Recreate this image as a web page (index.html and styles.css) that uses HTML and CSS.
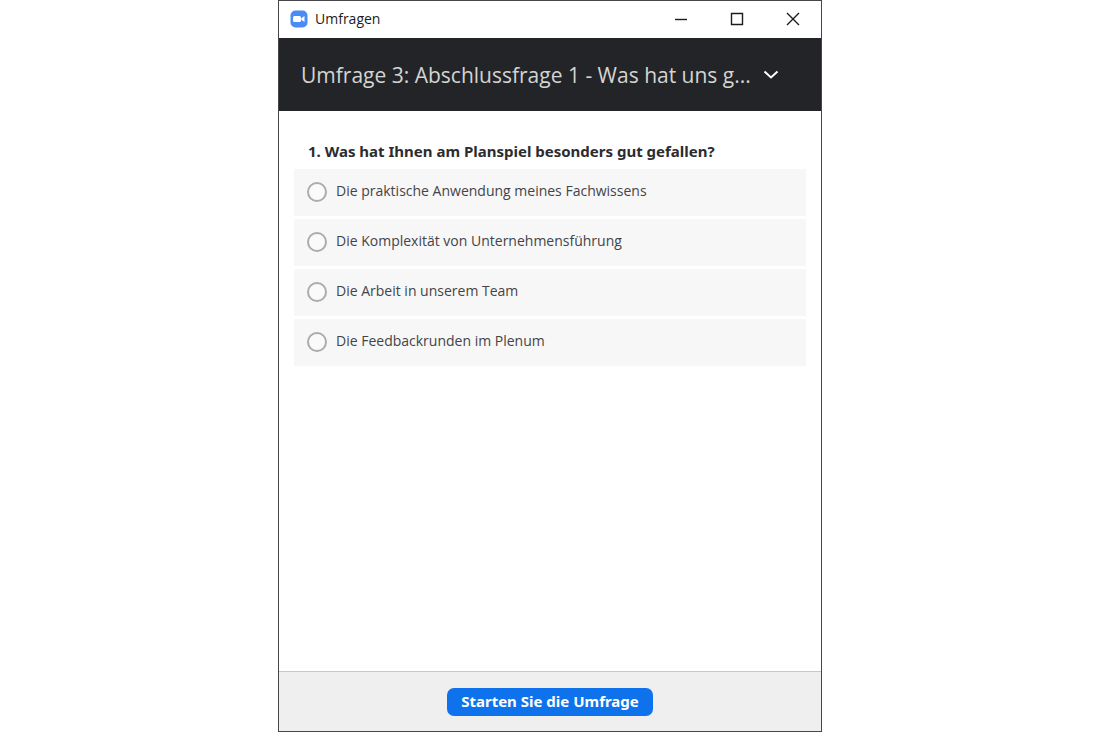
FILE: index.html
```html
<!DOCTYPE html>
<html lang="de">
<head>
  <meta charset="UTF-8">
  <meta name="viewport" content="width=device-width, initial-scale=1.0">
  <title>Umfragen</title>
  <link rel="stylesheet" href="styles.css">
</head>
<body>

  <div class="window">
    <header class="titlebar">
      <svg class="app-icon" viewBox="0 0 18 18" aria-hidden="true">
        <rect x="0.500" y="0.500" width="17" height="17" rx="5" fill="#4a8cf7"/>
        <rect x="3" y="6" width="8" height="6" rx="1.500" fill="#fff"/>
        <path d="M11.300 8.200 14.500 6v6l-3.200-2.200z" fill="#fff"/>
      </svg>
      <span class="app-name">Umfragen</span>
      <div class="window-controls">
        <button type="button" aria-label="Minimieren">
          <svg viewBox="0 0 14 14"><path d="M1 7.500h12"/></svg>
        </button>
        <button type="button" aria-label="Maximieren">
          <svg viewBox="0 0 14 14"><path d="M1.500 1.500h11v11h-11z"/></svg>
        </button>
        <button type="button" aria-label="Schließen">
          <svg viewBox="0 0 14 14"><path d="M1 1l12 12M13 1L1 13"/></svg>
        </button>
      </div>
    </header>

    <div class="poll-header">
      <div class="poll-picker">
        <select class="poll-select" aria-label="Umfrage auswählen">
          <option>Umfrage 3: Abschlussfrage 1 - Was hat uns g...</option>
        </select>
        <svg class="chevron" viewBox="0 0 16 10" aria-hidden="true"><path d="M1.500 1.500 8 7.500l6.500-6"/></svg>
      </div>
    </div>

    <form class="poll" id="pollForm">
      <fieldset class="question">
        <legend>1. Was hat Ihnen am Planspiel besonders gut gefallen?</legend>
        <label class="option"><input type="radio" name="q1"><span>Die praktische Anwendung meines Fachwissens</span></label>
        <label class="option"><input type="radio" name="q1"><span>Die Komplexität von Unternehmensführung</span></label>
        <label class="option"><input type="radio" name="q1"><span>Die Arbeit in unserem Team</span></label>
        <label class="option"><input type="radio" name="q1"><span>Die Feedbackrunden im Plenum</span></label>
      </fieldset>
    </form>

    <footer class="footer">
      <button type="submit" form="pollForm" class="start-btn">Starten Sie die Umfrage</button>
    </footer>
  </div>

</body>
</html>
```
FILE: styles.css
```css
* {
  box-sizing: border-box;
}

body {
  margin: 0;
  background: #fff;
  font-family: "Open Sans", "Noto Sans", sans-serif;
  font-size: 14px;
  color: #444448;
}

.window {
  display: flex;
  flex-direction: column;
  max-width: 544px;
  min-height: 100vh;
  margin: 0 auto;
  border: 1px solid #46464a;
  background: #fff;
}

.titlebar {
  display: flex;
  align-items: center;
  height: 37px;
  padding: 0 0 2px 11px;
}

.app-icon {
  width: 18px;
  height: 18px;
  margin-right: 7px;
}

.app-name {
  color: #1c1c1e;
}

.window-controls {
  display: flex;
  margin-left: auto;
}

.window-controls button {
  display: flex;
  align-items: center;
  justify-content: center;
  width: 56px;
  height: 35px;
  padding: 0;
  border: none;
  background: none;
}

.window-controls svg {
  width: 14px;
  height: 14px;
  fill: none;
  stroke: #1c1c1e;
  stroke-width: 1.4;
}

/* Dark bar with the poll drop-down */
.poll-header {
  display: flex;
  align-items: center;
  height: 73px;
  padding: 0 22px;
  background: #232428;
}

.poll-picker {
  display: grid;
  align-items: center;
  max-width: 100%;
}

.poll-select {
  grid-area: 1 / 1;
  min-width: 0;
  padding: 0 28px 0 0;
  border: none;
  background: transparent;
  color: #d4d4d2;
  font-family: inherit;
  font-size: 21px;
  line-height: 32px;
  appearance: none;
}

.chevron {
  grid-area: 1 / 1;
  justify-self: end;
  width: 16px;
  height: 10px;
  fill: none;
  stroke: #fff;
  stroke-width: 2;
  pointer-events: none;
}

.poll {
  flex: 1;
  padding: 29px 15px;
}

.question {
  display: flex;
  flex-direction: column;
  gap: 3px;
  min-width: 0;
  margin: 0;
  padding: 0;
  border: none;
}

.question legend {
  padding: 0 14px 7px;
  color: #2c2c30;
  font-family: "Noto Sans", sans-serif;
  font-size: 15px;
  font-weight: 700;
  line-height: 22px;
}

.option {
  display: flex;
  align-items: center;
  gap: 9px;
  min-height: 47px;
  padding: 0 13px 2px;
  background: #f7f7f7;
}

.option span {
  padding-bottom: 2px;
}

.option input {
  flex: none;
  width: 20px;
  height: 20px;
  margin: 0;
  border: 2px solid #acacae;
  border-radius: 50%;
  background: #fafafa;
  appearance: none;
}

.option input:checked {
  border: 6px solid #0e72ed;
}

.footer {
  display: flex;
  align-items: center;
  justify-content: center;
  height: 60px;
  border-top: 1px solid #c8c8c8;
  background: #efefef;
}

.start-btn {
  height: 28px;
  padding: 0 14px 2px;
  border: none;
  border-radius: 7px;
  background: #0e72ed;
  color: #fff;
  font-family: "Noto Sans", sans-serif;
  font-size: 15px;
  font-weight: 700;
}
```
